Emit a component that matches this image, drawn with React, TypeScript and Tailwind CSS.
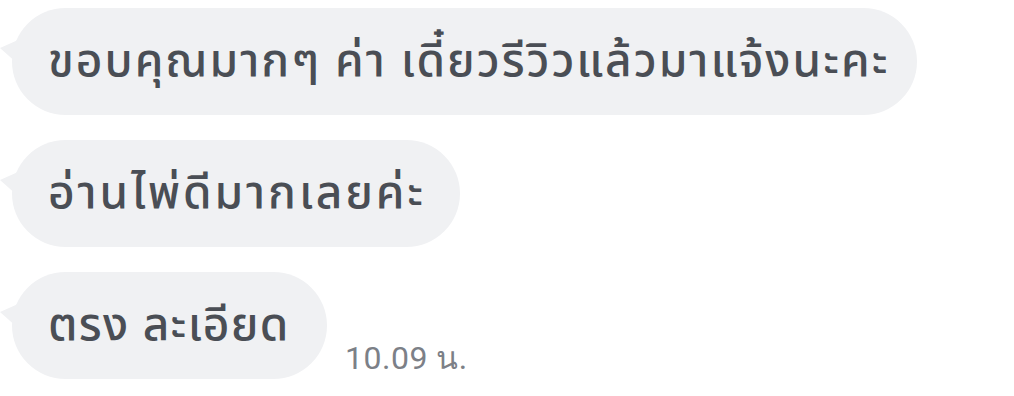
const FONT = "font-['Noto_Sans_Thai','Noto_Sans','Liberation_Sans',sans-serif]";

function Bubble({ text, width, tracking }: { text: string; width: string; tracking: string }) {
  return (
    <div className={`relative h-[107px] ${width} rounded-full bg-[#f0f1f3] flex items-center pl-[36px]`}>
      <div className="absolute left-[-12px] top-[32px] w-0 h-0 border-t-[8px] border-t-transparent border-b-[16px] border-b-transparent border-r-[18px] border-r-[#f0f1f3]" />
      <span className={`text-[46px] font-medium leading-none ${tracking} text-[#4a4e55] whitespace-nowrap`}>{text}</span>
    </div>
  );
}

export default function App() {
  return (
    <div className={`w-[1014px] h-[396px] bg-white pl-[12px] pt-[8px] flex flex-col gap-[25px] ${FONT}`}>
      <Bubble text="ขอบคุณมากๆ ค่า เดี๋ยวรีวิวแล้วมาแจ้งนะคะ" width="w-[905px]" tracking="tracking-[2px]" />
      <Bubble text="อ่านไพ่ดีมากเลยค่ะ" width="w-[448px]" tracking="tracking-[2.9px]" />
      <div className="flex items-end gap-[18px]">
        <Bubble text="ตรง ละเอียด" width="w-[315px]" tracking="tracking-[1.3px]" />
        <span className="font-['Roboto',sans-serif] text-[32px] leading-none tracking-[0.5px] text-[#7c8087] mb-[5px]">10.09 น.</span>
      </div>
    </div>
  );
}
